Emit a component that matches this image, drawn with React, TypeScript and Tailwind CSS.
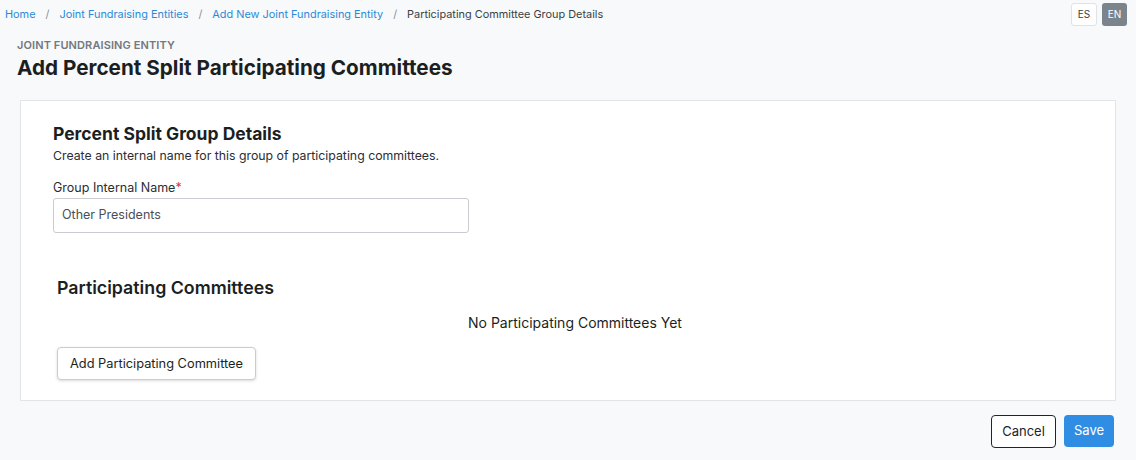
export default function App() {
  const crumbs = ["Home", "Joint Fundraising Entities", "Add New Joint Fundraising Entity"];
  return (
    <div className="min-h-[460px] w-[1136px] bg-[#f8f9fb] font-['Inter',sans-serif] text-[#212529]">
      {/* top bar */}
      <div className="flex h-[28px] items-center justify-between pl-[5px] pr-[9px]">
        <div className="flex items-center text-[10.9px]">
          {crumbs.map((c) => (
            <span key={c} className="flex items-center">
              <span className="text-[#2b8ad8]">{c}</span>
              <span className="mx-[10px] text-[#8a9097]">/</span>
            </span>
          ))}
          <span className="text-[#3a3f44]">Participating Committee Group Details</span>
        </div>
        <div className="flex gap-[5px] pt-[1px]">
          <button className="h-[23px] w-[26px] rounded-[3px] border border-[#dfe2e6] bg-white text-[10px] text-[#3a3f44]">ES</button>
          <button className="h-[23px] w-[25px] rounded-[3px] bg-[#7b838c] text-[10px] text-white">EN</button>
        </div>
      </div>

      <div className="px-[17px] pt-[11px]">
        <div className="text-[11px] font-semibold leading-[12px] tracking-[0.1px] text-[#73787e]">JOINT FUNDRAISING ENTITY</div>
        <h1 className="mt-[5px] text-[20.7px] font-bold leading-[24px] text-[#1c1f22]">Add Percent Split Participating Committees</h1>
      </div>

      <div className="mx-[20px] mt-[20px] h-[301px] border border-[#e2e4e7] bg-white pl-[32px] pr-[28px] pt-[23px]">
        <h2 className="text-[17.5px] font-bold leading-[20px] text-[#1c1f22]">Percent Split Group Details</h2>
        <p className="mt-[4px] text-[12.3px] leading-[15px] text-[#2a2e33]">Create an internal name for this group of participating committees.</p>
        <label className="mt-[17px] block text-[12.5px] leading-[15px] text-[#2a2e33]">
          Group Internal Name<span className="text-[#dc3545]">*</span>
        </label>
        <div className="mt-[3px] flex h-[35px] w-[416px] items-center rounded-[3px] border border-[#c9cdd2] bg-white px-[8px] text-[12.5px] text-[#4a4f55]">
          Other Presidents
        </div>

        <div className="pl-[4px] pt-[45px]">
          <h2 className="text-[17.8px] font-semibold leading-[20px] text-[#1c1f22]">Participating Committees</h2>
          <div className="mt-[17px] pl-[6px] text-center text-[14px] leading-[16px] text-[#1c1f22]">No Participating Committees Yet</div>
          <button className="mt-[16px] h-[33px] rounded-[4px] border border-[#c9cdd2] bg-white px-[12px] text-[12.8px] text-[#1c1f22] shadow-[0_1px_3px_rgba(0,0,0,0.15)]">
            Add Participating Committee
          </button>
        </div>
      </div>

      <div className="flex justify-end gap-[8px] pr-[22px] pt-[14px]">
        <button className="h-[33px] w-[65px] rounded-[4px] border border-[#212529] bg-white text-[13px] text-[#212529]">Cancel</button>
        <button className="h-[32px] w-[50px] rounded-[4px] bg-[#2f8de4] text-[13px] text-white">Save</button>
      </div>
    </div>
  );
}
